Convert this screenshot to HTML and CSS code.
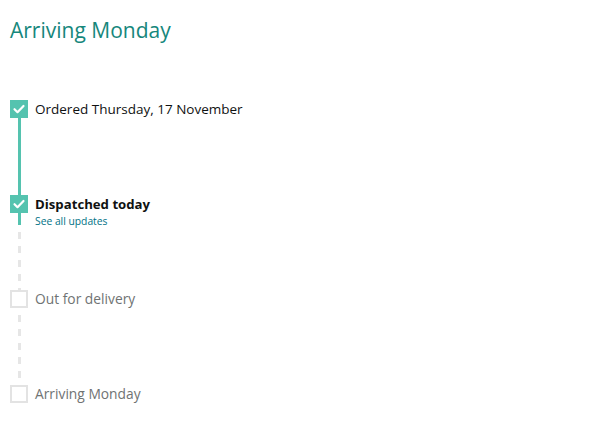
FILE: index.html
```html
<!DOCTYPE html>
<html lang="en">
<head>
    <meta charset="UTF-8">
    <title>Track package</title>
    <link rel="stylesheet" href="styles.css">
</head>
<body>

<div class="tracker">
    <h1 class="arrival">Arriving Monday</h1>

    <ul class="steps">
        <li class="step done">
            <div class="rail">
                <span class="box"><svg viewBox="0 0 18 18"><path d="M4.5 9.2l3 3 6-6.2"/></svg></span>
                <span class="line solid"></span>
            </div>
            <div class="label">Ordered Thursday, 17 November</div>
        </li>
        <li class="step done current">
            <div class="rail">
                <span class="box"><svg viewBox="0 0 18 18"><path d="M4.5 9.2l3 3 6-6.2"/></svg></span>
                <span class="line stub"></span>
                <span class="line dashed"></span>
            </div>
            <div class="label">
                <strong>Dispatched today</strong>
                <a href="#" class="updates">See all updates</a>
            </div>
        </li>
        <li class="step">
            <div class="rail">
                <span class="box"></span>
                <span class="line dashed"></span>
            </div>
            <div class="label">Out for delivery</div>
        </li>
        <li class="step last">
            <div class="rail">
                <span class="box"></span>
            </div>
            <div class="label">Arriving Monday</div>
        </li>
    </ul>
</div>

</body>
</html>
```

FILE: styles.css
```css
* {
    box-sizing: border-box;
}

body {
    margin: 0;
    font-family: 'Open Sans', 'Noto Sans', sans-serif;
    background-color: #fff;
    color: #0f1111;
}

.tracker {
    padding: 14px 10px;
}

.arrival {
    margin: 0 0 54px;
    font-size: 21px;
    font-weight: 400;
    color: #16877c;
    line-height: 32px;
}

.steps {
    list-style: none;
    margin: 0;
    padding: 0;
}

.step {
    display: flex;
    height: 95px;
}

.step.last {
    height: auto;
}

.rail {
    width: 18px;
    display: flex;
    flex-direction: column;
    align-items: center;
    margin-right: 7px;
}

.box {
    width: 18px;
    height: 18px;
    flex: none;
    border: 2px solid #e3e3e3;
    background: #fff;
}

.box svg {
    display: block;
    width: 18px;
    height: 18px;
    margin: -2px;
}

.box path {
    fill: none;
    stroke: #fff;
    stroke-width: 2.2;
    stroke-linecap: round;
    stroke-linejoin: round;
}

.done .box {
    background: #55c3af;
    border-color: #55c3af;
}

.line {
    width: 3px;
}

.line.solid {
    flex: 1;
    background: #55c3af;
}

.line.stub {
    height: 12px;
    flex: none;
    background: #55c3af;
}

.line.dashed {
    flex: 1;
    margin-top: 7px;
    background: repeating-linear-gradient(to bottom, #e6e6e6 0 7px, transparent 7px 14px);
}

.label {
    font-size: 13.5px;
    line-height: 18px;
    color: #6f7373;
}

.step:not(.done) .label {
    font-size: 13.8px;
}

.done .label {
    color: #0f1111;
}

.label strong {
    display: block;
    font-weight: 700;
    font-size: 13.2px;
}

.updates {
    display: block;
    margin-top: 1px;
    font-size: 10.3px;
    line-height: 14px;
    color: #007185;
    text-decoration: none;
}
```
